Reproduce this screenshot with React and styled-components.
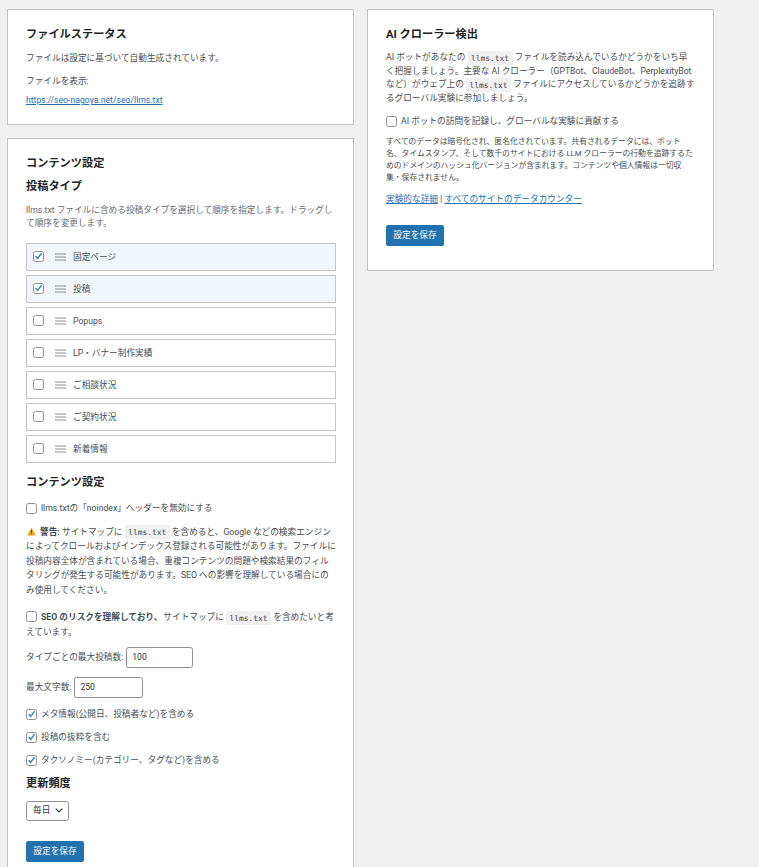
import React from 'react';
import styled, { createGlobalStyle } from 'styled-components';

const postTypes = [
    { label: '固定ページ', checked: true },
    { label: '投稿', checked: true },
    { label: 'Popups' },
    { label: 'LP・バナー制作実績' },
    { label: 'ご相談状況' },
    { label: 'ご契約状況' },
    { label: '新着情報' },
];

const Check = ({ checked }) => (
    <CheckBox>
        {checked && (
            <svg width="10" height="10" viewBox="0 0 10 10">
                <path d="M1.8 5.2 L4.1 7.6 L8.4 1.8" fill="none" stroke="#3582c4" strokeWidth="1.6" />
            </svg>
        )}
    </CheckBox>
);

const Handle = () => (
    <svg width="11" height="8" viewBox="0 0 11 8">
        <path d="M0 1h11M0 4h11M0 7h11" stroke="#8c8f94" strokeWidth="1.1" />
    </svg>
);

const WarningIcon = () => (
    <svg width="9" height="9" viewBox="0 0 10 10" style={{ marginLeft: 1, marginRight: 4, verticalAlign: -1 }}>
        <path d="M5 .6 L9.8 9.4 H.2 Z" fill="#f2a31b" />
        <path d="M5 3.4v3M5 7.4v1" stroke="#4a3a12" strokeWidth="1" />
    </svg>
);

const App = () => (
    <>
        <GlobalStyle />
        <Page>
            <Column>
                <Card>
                    <CardTitle>ファイルステータス</CardTitle>
                    <Text>ファイルは設定に基づいて自動生成されています。</Text>
                    <Text>ファイルを表示:</Text>
                    <UrlLine><Link href="#">https://seo-nagoya.net/seo/llms.txt</Link></UrlLine>
                </Card>
                <Card>
                    <CardTitle>コンテンツ設定</CardTitle>
                    <SubTitle>投稿タイプ</SubTitle>
                    <Description>llms.txt ファイルに含める投稿タイプを選択して順序を指定します。ドラッグして順序を変更します。</Description>
                    <TypeList>
                        {postTypes.map((type) => (
                            <TypeRow key={type.label} $checked={type.checked}>
                                <Check checked={type.checked} />
                                <Handle />
                                <span>{type.label}</span>
                            </TypeRow>
                        ))}
                    </TypeList>
                    <SectionTitle>コンテンツ設定</SectionTitle>
                    <OptionRow>
                        <Check />
                        <span>llms.txtの「noindex」ヘッダーを無効にする</span>
                    </OptionRow>
                    <Warning>
                        <WarningIcon /><strong>警告:</strong> サイトマップに <Code>llms.txt</Code> を含めると、Google などの検索エンジンによってクロールおよびインデックス登録される可能性があります。ファイルに投稿内容全体が含まれている場合、重複コンテンツの問題や検索結果のフィルタリングが発生する可能性があります。SEO への影響を理解している場合にのみ使用してください。
                    </Warning>
                    <RiskLabel>
                        <Check />
                        <strong>SEO のリスクを理解しており、</strong>サイトマップに <Code>llms.txt</Code> を含めたいと考えています。
                    </RiskLabel>
                    <FieldRow>
                        タイプごとの最大投稿数:
                        <NumberBox $width={67}>100</NumberBox>
                    </FieldRow>
                    <FieldRow>
                        最大文字数:
                        <NumberBox $width={69}>250</NumberBox>
                    </FieldRow>
                    <Options>
                        <OptionRow><Check checked /><span>メタ情報(公開日、投稿者など)を含める</span></OptionRow>
                        <OptionRow><Check checked /><span>投稿の抜粋を含む</span></OptionRow>
                        <OptionRow><Check checked /><span>タクソノミー(カテゴリー、タグなど)を含める</span></OptionRow>
                    </Options>
                    <FrequencyTitle>更新頻度</FrequencyTitle>
                    <SelectBox>
                        毎日
                        <svg width="8" height="5" viewBox="0 0 8 5">
                            <path d="M.7.7 L4 4 L7.3.7" fill="none" stroke="#2c3338" strokeWidth="1.1" />
                        </svg>
                    </SelectBox>
                    <SaveButton $top={20}>設定を保存</SaveButton>
                </Card>
            </Column>
            <Column>
                <Card>
                    <CardTitle>AI クローラー検出</CardTitle>
                    <Intro>
                        AI ボットがあなたの <Code>llms.txt</Code> ファイルを読み込んでいるかどうかをいち早く把握しましょう。主要な AI クローラー（GPTBot、ClaudeBot、PerplexityBot など）がウェブ上の <Code>llms.txt</Code> ファイルにアクセスしているかどうかを追跡するグローバル実験に参加しましょう。
                    </Intro>
                    <OptionRow>
                        <Check />
                        <span>AI ボットの訪問を記録し、グローバルな実験に貢献する</span>
                    </OptionRow>
                    <SmallText>
                        すべてのデータは暗号化され、匿名化されています。共有されるデータには、ボット名、タイムスタンプ、そして数千のサイトにおける LLM クローラーの行動を追跡するためのドメインのハッシュ化バージョンが含まれます。コンテンツや個人情報は一切収集・保存されません。
                    </SmallText>
                    <Links>
                        <Link href="#">実験的な詳細</Link> | <Link href="#">すべてのサイトのデータカウンター</Link>
                    </Links>
                    <SaveButton $top={18}>設定を保存</SaveButton>
                </Card>
            </Column>
        </Page>
    </>
);

const GlobalStyle = createGlobalStyle`
    html, body {
        margin: 0;
        background: #f0f0f1;
    }
    body {
        font-family: "Roboto", "Noto Sans CJK JP", sans-serif;
        font-size: 8.67px;
        line-height: 14.5px;
        color: #454c53;
    }
`;

const Page = styled.div`
    display: grid;
    grid-template-columns: 347px 347px;
    gap: 13px;
    align-items: start;
    height: 867px;
    overflow: hidden;
    padding: 9px 0 0 7px;
`;

const Column = styled.div`
    display: flex;
    flex-direction: column;
    gap: 13px;
`;

const Card = styled.div`
    background: #fff;
    border: 1px solid #c3c4c7;
    padding: 18px 17px 16px 18px;
`;

const CardTitle = styled.h2`
    margin: 0 0 9px;
    font-size: 11.2px;
    line-height: 14px;
    font-weight: 700;
    color: #1d2327;
`;

const SubTitle = styled.h3`
    margin: 9px 0 10px;
    font-size: 11.2px;
    line-height: 14px;
    font-weight: 700;
    color: #1d2327;
`;

const SectionTitle = styled(SubTitle)`
    margin: 13px 0 11px;
`;

const FrequencyTitle = styled(SubTitle)`
    margin: 9px 0 10px;
`;

const Text = styled.p`
    margin: 0 0 8px;
`;

const UrlLine = styled.p`
    margin: -3px 0 0;
`;

const Link = styled.a`
    color: #2271b1;
    text-decoration: underline;
`;

const Description = styled.p`
    margin: 0 0 13px;
    line-height: 13.3px;
    color: #646970;
`;

const TypeList = styled.div`
    display: flex;
    flex-direction: column;
    gap: 4px;
`;

const CheckBox = styled.span`
    display: inline-flex;
    align-items: center;
    justify-content: center;
    flex: none;
    width: 11px;
    height: 11px;
    box-sizing: border-box;
    border: 1px solid #8c8f94;
    border-radius: 2.5px;
    background: #fff;
`;

const TypeRow = styled.div`
    display: flex;
    align-items: center;
    height: 28px;
    box-sizing: border-box;
    padding: 0 0 0 6px;
    gap: 11px;
    border: 1px solid #c3c4c7;
    background: ${(props) => (props.$checked ? '#f0f6fc' : '#fff')};

    ${CheckBox} {
        margin-top: -2px;
    }

    span:last-child {
        margin-left: -4px;
    }
`;

const OptionRow = styled.label`
    display: flex;
    align-items: center;
    gap: 4px;
    min-height: 14px;
`;

const Warning = styled.p`
    margin: 9px 0 13px;
`;

const RiskLabel = styled.p`
    margin: 0 0 8px;

    ${CheckBox} {
        margin-right: 4px;
        vertical-align: -2px;
    }

    strong {
        margin-right: 1px;
    }
`;

const Code = styled.code`
    font-family: "DejaVu Sans Mono", "Liberation Mono", monospace;
    font-size: 7.9px;
    line-height: 1;
    background: #f0f0f1;
    padding: 2.5px 3.5px;
    color: #3c434a;
`;

const FieldRow = styled.div`
    display: flex;
    align-items: center;
    gap: 3px;
    margin-bottom: 9px;
`;

const NumberBox = styled.div`
    width: ${(props) => props.$width}px;
    height: 21px;
    box-sizing: border-box;
    padding: 0 5px;
    display: flex;
    align-items: center;
    border: 1px solid #8c8f94;
    border-radius: 2.5px;
    color: #2c3338;
`;

const Options = styled.div`
    display: flex;
    flex-direction: column;
    gap: 8.5px;
`;

const SelectBox = styled.div`
    display: inline-flex;
    align-items: center;
    gap: 5px;
    height: 20px;
    box-sizing: border-box;
    padding: 0 5px 0 6px;
    border: 1px solid #8c8f94;
    border-radius: 2.5px;
    color: #2c3338;
`;

const SaveButton = styled.button`
    display: block;
    width: 58px;
    height: 21px;
    padding: 0;
    margin: ${(props) => props.$top}px 0 8px;
    border: 1px solid #2271b1;
    border-radius: 2px;
    background: #2271b1;
    color: #fff;
    font: inherit;
`;

const Intro = styled.p`
    margin: 0 0 8px;
    line-height: 13.7px;
`;

const SmallText = styled.p`
    margin: 8px 0 8px;
    font-size: 7.8px;
    line-height: 12px;
`;

const Links = styled.p`
    margin: 0;
`;

export default App;
